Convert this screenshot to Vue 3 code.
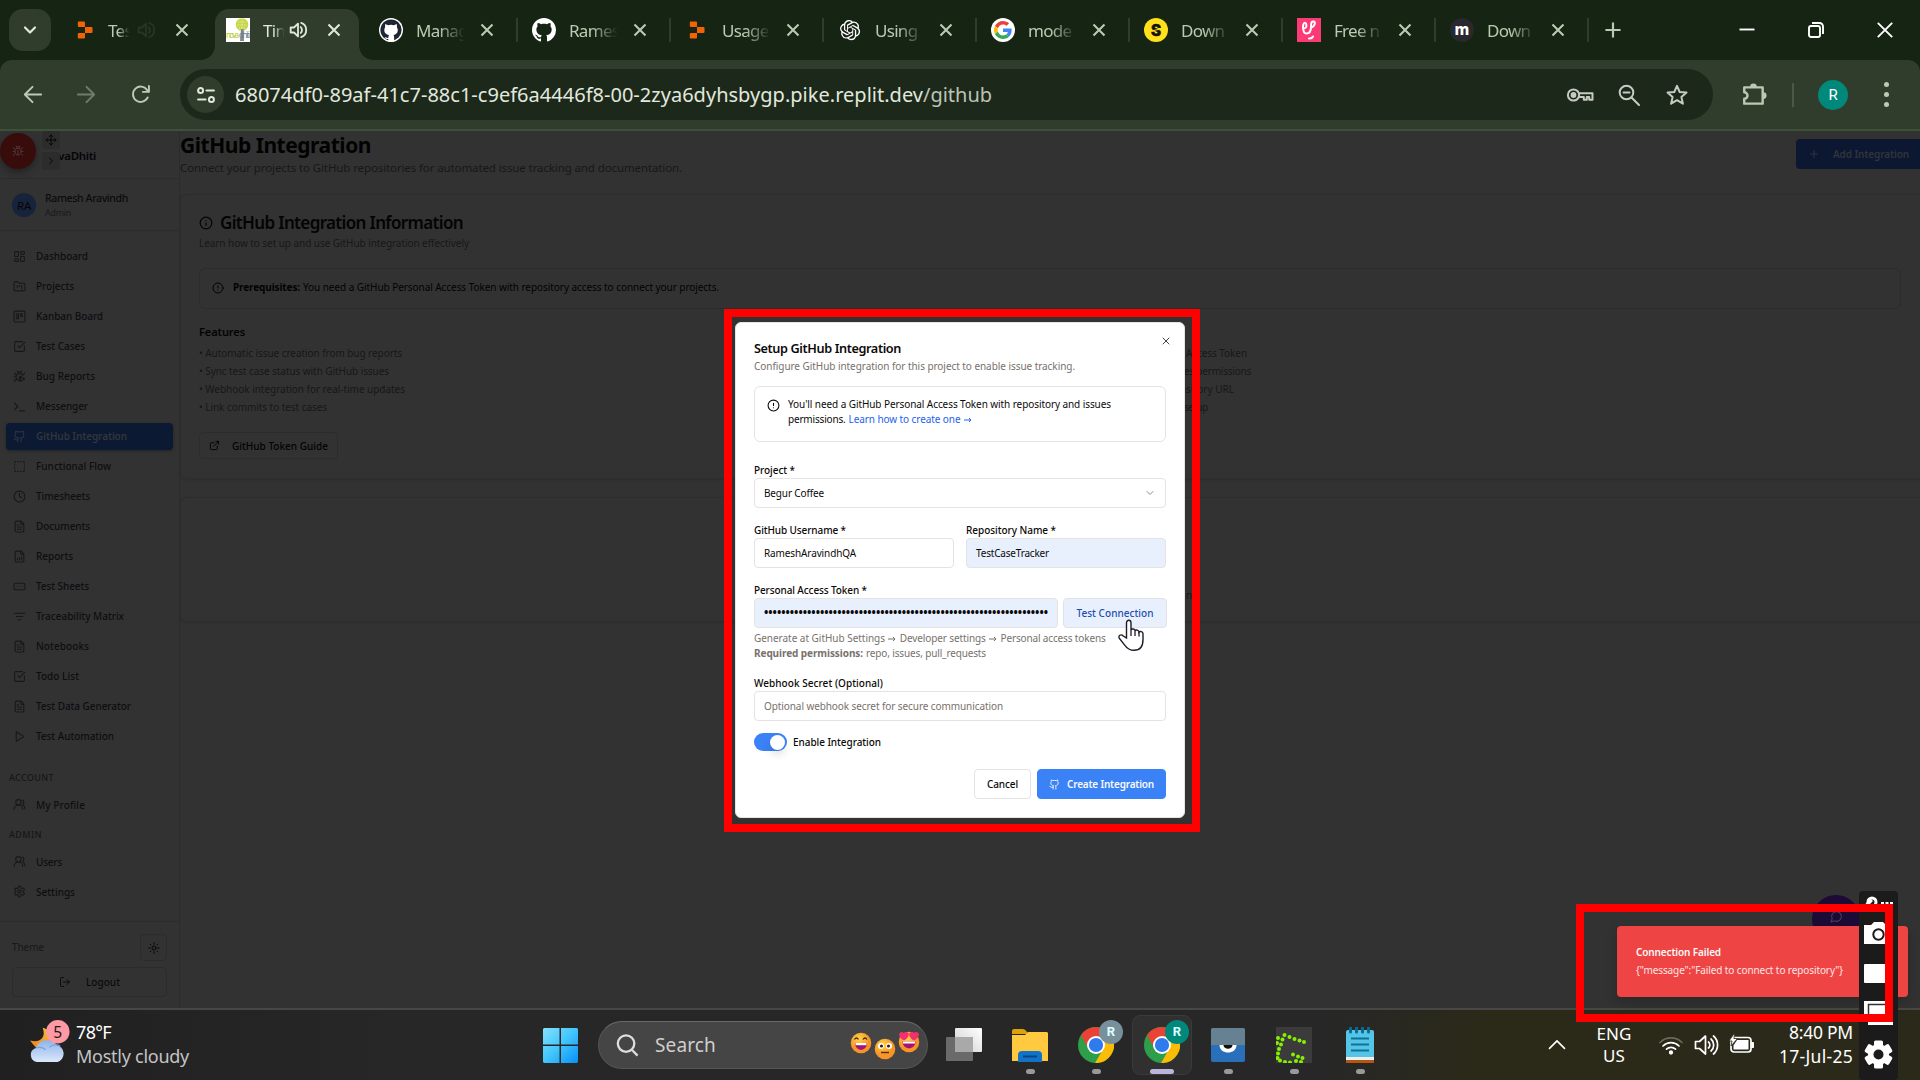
<script setup>
// Tunes tracking so a label occupies the given width in pixels.
const fit = (el, { value }) => {
  if (!value) return
  el.style.letterSpacing = '0px'
  const n = el.textContent.length
  el.style.letterSpacing = `${(value - el.getBoundingClientRect().width) / n}px`
}
const vFit = { mounted: fit }

const speaker = '<path d="M4 9.3v5.4h3.6L12 19V5L7.6 9.3z"/><path d="M15 8.8a4.5 4.5 0 0 1 0 6.4"/><path d="M15.5 4.2a8.3 8.3 0 0 1 0 15.6"/>'
const ico = {
  grid: '<rect x="3" y="3" width="7" height="9" rx="1"/><rect x="14" y="3" width="7" height="5" rx="1"/><rect x="14" y="12" width="7" height="9" rx="1"/><rect x="3" y="16" width="7" height="5" rx="1"/>',
  folder: '<path d="M4 20h16a2 2 0 0 0 2-2V8a2 2 0 0 0-2-2h-7.93a2 2 0 0 1-1.66-.9l-.82-1.2A2 2 0 0 0 7.93 3H4a2 2 0 0 0-2 2v13c0 1.1.9 2 2 2Z"/><path d="M8 10v4M12 10v2M16 10v6"/>',
  kanban: '<rect x="2" y="2" width="20" height="20" rx="2"/><rect x="7" y="7" width="3" height="9"/><rect x="14" y="7" width="3" height="5"/>',
  check: '<path d="M21 10.5V19a2 2 0 0 1-2 2H5a2 2 0 0 1-2-2V5a2 2 0 0 1 2-2h12.5"/><path d="m9 11 3 3L22 4"/>',
  bugplay: '<path d="M12.77 19.67A6 6 0 0 1 6 14v-3a4 4 0 0 1 4-4h4a4 4 0 0 1 3.9 3.1M12 20v-9M14 12l7.5 4.5L14 21zM2 13h4M3 21c0-2.1 1.7-3.9 3.8-4M6.5 9C4.6 8.8 3 7.1 3 5M8 2l1.9 1.9M14.1 3.9 16 2M9 7.1v-1a3 3 0 1 1 6 0v1M21 5c0 2.1-1.6 3.8-3.5 4"/>',
  bug: '<path d="m8 2 1.88 1.88M14.12 3.88 16 2M9 7.13v-1a3 3 0 1 1 6 0v1M12 20c-3.3 0-6-2.7-6-6v-3a4 4 0 0 1 4-4h4a4 4 0 0 1 4 4v3c0 3.3-2.7 6-6 6M12 20v-9M6.53 9C4.6 8.8 3 7.1 3 5M6 13H2M3 21c0-2.1 1.7-3.9 3.8-4M20.97 5c0 2.1-1.6 3.8-3.5 4M22 13h-4M17.2 17c2.1.1 3.8 1.9 3.8 4"/>',
  terminal: '<path d="m3 18 6-6-6-6M12 20h9"/>',
  github: '<path d="M15 22v-4a4.8 4.8 0 0 0-1-3.5c3 0 6-2 6-5.5.08-1.25-.27-2.48-1-3.5.28-1.15.28-2.35 0-3.5 0 0-1 0-3 1.5-2.64-.5-5.36-.5-8 0C6 2 5 2 5 2c-.3 1.15-.3 2.35 0 3.5A5.4 5.4 0 0 0 4 9c0 3.5 3 5.5 6 5.5-.39.49-.68 1.05-.85 1.65S8.93 17.38 9 18v4"/><path d="M9 18c-4.51 2-5-2-7-2"/>',
  dashed: '<path d="M5 3a2 2 0 0 0-2 2M19 3a2 2 0 0 1 2 2M21 19a2 2 0 0 1-2 2M5 21a2 2 0 0 1-2-2M9 3h1M9 21h1M14 3h1M14 21h1M3 9v1M21 9v1M3 14v1M21 14v1"/>',
  clock: '<circle cx="12" cy="12" r="10"/><path d="M12 6v6l4 2"/>',
  file: '<path d="M15 2H6a2 2 0 0 0-2 2v16a2 2 0 0 0 2 2h12a2 2 0 0 0 2-2V7zM14 2v4a2 2 0 0 0 2 2h4M10 9H8M16 13H8M16 17H8"/>',
  report: '<path d="M15 2H6a2 2 0 0 0-2 2v16a2 2 0 0 0 2 2h12a2 2 0 0 0 2-2V7zM14 2v4a2 2 0 0 0 2 2h4M8 18v-2M12 18v-4M16 18v-6"/>',
  sheet: '<rect x="2" y="6" width="20" height="12" rx="2"/><path d="M12 12h.01M17 12h.01M7 12h.01"/>',
  filter: '<path d="M2 6h20M6 12h12M9 18h6"/>',
  play: '<path d="M6 3l14 9-14 9z"/>',
  users: '<path d="M18 21a8 8 0 0 0-16 0"/><circle cx="10" cy="8" r="5"/><path d="M22 20c0-3.37-2-6.5-4-8a5 5 0 0 0-.45-8.3"/>',
  gear: '<path d="M12.22 2h-.44a2 2 0 0 0-2 2v.18a2 2 0 0 1-1 1.73l-.43.25a2 2 0 0 1-2 0l-.15-.08a2 2 0 0 0-2.73.73l-.22.38a2 2 0 0 0 .73 2.73l.15.1a2 2 0 0 1 1 1.72v.51a2 2 0 0 1-1 1.74l-.15.09a2 2 0 0 0-.73 2.73l.22.38a2 2 0 0 0 2.73.73l.15-.08a2 2 0 0 1 2 0l.43.25a2 2 0 0 1 1 1.73V20a2 2 0 0 0 2 2h.44a2 2 0 0 0 2-2v-.18a2 2 0 0 1 1-1.73l.43-.25a2 2 0 0 1 2 0l.15.08a2 2 0 0 0 2.73-.73l.22-.39a2 2 0 0 0-.73-2.73l-.15-.08a2 2 0 0 1-1-1.74v-.5a2 2 0 0 1 1-1.74l.15-.09a2 2 0 0 0 .73-2.73l-.22-.38a2 2 0 0 0-2.73-.73l-.15.08a2 2 0 0 1-2 0l-.43-.25a2 2 0 0 1-1-1.73V4a2 2 0 0 0-2-2z"/><circle cx="12" cy="12" r="3"/>',
  sun: '<circle cx="12" cy="12" r="4"/><path d="M12 1.5v3M12 19.500v3M4.600 4.600l1.200 1.200M18.200 18.200l1.200 1.200M1.500 12h3M19.500 12h3M5.800 18.200l-1.200 1.200M19.400 4.600l-1.200 1.200"/>',
  logout: '<path d="M9 21H5a2 2 0 0 1-2-2V5a2 2 0 0 1 2-2h4M16 17l5-5-5-5M21 12H9"/>',
  info: '<circle cx="12" cy="12" r="10"/><path d="M12 16v-4M12 8h.01"/>',
  alert: '<circle cx="12" cy="12" r="10"/><path d="M12 8v4M12 16h.01"/>',
  external: '<path d="M15 3h6v6M10 14 21 3M18 13v6a2 2 0 0 1-2 2H5a2 2 0 0 1-2-2V8a2 2 0 0 1 2-2h6"/>',
  move: '<path d="M12 2v20M2 12h20M9 5l3-3 3 3M9 19l3 3 3-3M5 9l-3 3 3 3M19 9l3 3-3 3"/>',
  right: '<path d="m9 18 6-6-6-6"/>',
  down: '<path d="m6 9 6 6 6-6"/>',
  up: '<path d="m3 16 9-9 9 9"/>',
  x: '<path d="M18 6 6 18M6 6l12 12"/>',
  plus: '<path d="M5 12h14M12 5v14"/>',
  chat: '<path d="M7.900 20A9 9 0 1 0 4 16.100L2 22Z"/>',
  back: '<path d="M21 12H4M12 4l-8 8 8 8"/>',
  forward: '<path d="M3 12h17M12 4l8 8-8 8"/>',
  reload: '<path d="M19.500 15A8 8 0 1 1 19 7.500L20.500 9M20.800 3v6.300h-6.300"/>',
  tune: '<circle cx="5.500" cy="6.500" r="3"/><path d="M12.500 6.500h9M2.500 17.500h9"/><circle cx="18.500" cy="17.500" r="3"/>',
  key: '<circle cx="7" cy="12" r="5.600"/><circle cx="7" cy="12" r="1.900" fill="currentColor"/><path d="M12.500 10.200H26v6.600h-3.300v-2.900h-2.400v2.900h-3v-2.900h-4.800"/>',
  zoomout: '<circle cx="9.500" cy="9.500" r="6.800"/><path d="m14.500 14.500 7.500 7.500M6.500 9.500h6"/>',
  star: '<path d="m12 2.800 2.700 6.200 6.800.6-5.100 4.500 1.500 6.600-5.900-3.500-5.900 3.500 1.500-6.600-5.100-4.500 6.800-.6z"/>',
  puzzle: '<path d="M3 5h17v15H3v-4.500a3 3 0 0 0 0-6z"/><path d="M9.500 4.500a2 2 0 0 1 4 0M20.500 10.500a2 2 0 0 1 0 4" fill="currentColor"/>',
  speaker
}

const octo = 'M8 0C3.58 0 0 3.58 0 8c0 3.54 2.29 6.53 5.47 7.59.4.07.55-.17.55-.38 0-.19-.01-.82-.01-1.49-2.01.37-2.53-.49-2.69-.94-.09-.23-.48-.94-.82-1.13-.28-.15-.68-.52-.01-.53.63-.01 1.08.58 1.23.82.72 1.21 1.87.87 2.33.66.07-.52.28-.87.51-1.07-1.78-.2-3.64-.89-3.64-3.95 0-.87.31-1.59.82-2.15-.08-.2-.36-1.02.08-2.12 0 0 .67-.21 2.2.82.64-.18 1.32-.27 2-.27s1.36.09 2 .27c1.53-1.04 2.2-.82 2.2-.82.44 1.1.16 1.92.08 2.12.51.56.82 1.27.82 2.15 0 3.07-1.87 3.75-3.65 3.95.29.25.54.73.54 1.48 0 1.07-.01 1.93-.01 2.2 0 .21.15.46.55.38A8.01 8.01 0 0 0 16 8c0-4.42-3.58-8-8-8'
const openai = 'M22.2819 9.8211a5.9847 5.9847 0 0 0-.5157-4.9108 6.0462 6.0462 0 0 0-6.5098-2.9A6.0651 6.0651 0 0 0 4.9807 4.1818a5.9847 5.9847 0 0 0-3.9977 2.9 6.0462 6.0462 0 0 0 .7427 7.0966 5.98 5.98 0 0 0 .511 4.9107 6.051 6.051 0 0 0 6.5146 2.9001A5.9847 5.9847 0 0 0 13.2599 24a6.0557 6.0557 0 0 0 5.7718-4.2058 5.9894 5.9894 0 0 0 3.9977-2.9001 6.0557 6.0557 0 0 0-.7475-7.0729zm-9.022 12.6081a4.4755 4.4755 0 0 1-2.8764-1.0408l.1419-.0804 4.7783-2.7582a.7948.7948 0 0 0 .3927-.6813v-6.7369l2.02 1.1686a.071.071 0 0 1 .038.052v5.5826a4.504 4.504 0 0 1-4.4945 4.4944zm-9.6607-4.1254a4.4708 4.4708 0 0 1-.5346-3.0137l.142.0852 4.783 2.7582a.7712.7712 0 0 0 .7806 0l5.8428-3.3685v2.3324a.0804.0804 0 0 1-.0332.0615L9.74 19.9502a4.4992 4.4992 0 0 1-6.1408-1.6464zM2.3408 7.8956a4.485 4.485 0 0 1 2.3655-1.9728V11.6a.7664.7664 0 0 0 .3879.6765l5.8144 3.3543-2.0201 1.1685a.0757.0757 0 0 1-.071 0l-4.8303-2.7865A4.504 4.504 0 0 1 2.3408 7.872zm16.5963 3.8558L13.1038 8.364 15.1192 7.2a.0757.0757 0 0 1 .071 0l4.8303 2.7913a4.4944 4.4944 0 0 1-.6765 8.1042v-5.6772a.79.79 0 0 0-.407-.667zm2.0107-3.0231l-.142-.0852-4.7735-2.7818a.7759.7759 0 0 0-.7854 0L9.409 9.2297V6.8974a.0662.0662 0 0 1 .0284-.0615l4.8303-2.7866a4.4992 4.4992 0 0 1 6.6802 4.66zM8.3065 12.863l-2.02-1.1638a.0804.0804 0 0 1-.038-.0567V6.0742a4.4992 4.4992 0 0 1 7.3757-3.4537l-.142.0805L8.704 5.459a.7948.7948 0 0 0-.3927.6813zm1.0976-2.3654l2.602-1.4998 2.6069 1.4998v2.9994l-2.5974 1.4997-2.6067-1.4997Z'
const replit = '<g fill="#f26207"><path d="M5.500 3.500h5.500a1 1 0 0 1 1 1V9H6a1.200 1.200 0 0 1-1.200-1.200V4.500a1 1 0 0 1 .7-1zM12 9h6.500a1 1 0 0 1 1 1v4a1 1 0 0 1-1 1H12zM5.800 15H12v4.600a1 1 0 0 1-1 1H5.800a1 1 0 0 1-1-1V16a1 1 0 0 1 1-1z"/></g>'
const fav = {
  replit,
  nova: '<rect width="24" height="24" fill="#fff"/><circle cx="16" cy="6.500" r="6.300" fill="#c6d84a"/><path d="M12 4h8M11 7h10M13 10h7M16 1v11" stroke="#eef3c0" stroke-width=".8" stroke-dasharray="1.200 1.200"/><path d="M15 11h2.500l.5 12h-4z" fill="#7f8a90"/><text x="0" y="19.500" font-size="8" textLength="13" fill="#b4cc2c" font-family="Noto Sans">nova</text><text x="13" y="19.500" font-size="8" textLength="11" fill="#777f85" font-family="Noto Sans">dhiti</text>',
  ghdark: `<circle cx="12" cy="12" r="12" fill="#fff"/><circle cx="12" cy="12" r="10.600" fill="#1f2533"/><path d="M6.200 6l3 1.200a9 9 0 0 1 5.600 0l3-1.200.2 3.500c2 3.500 0 7-3.500 7.500.7.8.7 2 .7 6.800H9.300v-2.800c-2.300.4-3-.8-3.700-2 1.500 0 2 1.300 3.700.9 0-1.300.2-2.200.7-2.900C6 16.500 4.200 13 6 9.500z" fill="#fff"/>`,
  gh: `<path transform="scale(1.5)" fill="#fff" d="${octo}"/>`,
  openai: `<path transform="translate(2 2) scale(.84)" fill="#fff" d="${openai}"/>`,
  google: '<circle cx="12" cy="12" r="12" fill="#fff"/><g transform="translate(3 3) scale(.375)"><path fill="#EA4335" d="M24 9.500c3.540 0 6.710 1.220 9.210 3.600l6.850-6.850C35.900 2.380 30.470 0 24 0 14.620 0 6.510 5.380 2.560 13.220l7.980 6.190C12.430 13.720 17.740 9.500 24 9.500z"/><path fill="#4285F4" d="M46.980 24.550c0-1.570-.15-3.090-.38-4.550H24v9.020h12.940c-.58 2.960-2.260 5.480-4.780 7.180l7.730 6c4.510-4.180 7.090-10.360 7.090-17.650z"/><path fill="#FBBC05" d="M10.530 28.590c-.48-1.450-.76-2.990-.76-4.590s.27-3.140.76-4.590l-7.980-6.190C.92 16.460 0 20.120 0 24c0 3.880.92 7.540 2.560 10.780z"/><path fill="#34A853" d="M24 48c6.480 0 11.930-2.130 15.890-5.810l-7.730-6c-2.150 1.450-4.920 2.300-8.160 2.300-6.260 0-11.570-4.220-13.470-9.910l-7.980 6.190C6.510 42.620 14.620 48 24 48z"/></g>',
  yellow: '<circle cx="12" cy="12" r="12" fill="#ffe01b"/><text x="12" y="17.800" text-anchor="middle" font-size="16" font-weight="900" fill="#111" stroke="#111" stroke-width=".6" font-family="Roboto">S</text><path d="M8 12.800l8-1.600" stroke="#ffe01b" stroke-width="1"/>',
  pink: '<rect width="24" height="24" fill="#fb3a76"/><g fill="none" stroke="#fff" stroke-width="2" stroke-linecap="round"><path d="M6 10.500c3 0 4-2 3.200-4.500C8.300 3.500 5.800 5 6 9c.1 4 .8 6.500 3.500 6.500 3.500 0 4.500-3 4.500-7 0-4 .8-5.500 2.800-5 2 .7.800 5-2.300 6"/><path d="M12 20.500c2 .3 3.200-.3 4-2"/></g>',
  m: '<circle cx="12" cy="12" r="12" fill="#29282d"/><text x="12" y="16.500" text-anchor="middle" font-size="15" font-weight="800" fill="#fff" font-family="Noto Sans">m</text>'
}
const tabs = [
  { icon: 'ghdark', text: 'Manag' }, { icon: 'gh', text: 'Rames' }, { icon: 'replit', text: 'Usage' },
  { icon: 'openai', text: 'Using' }, { icon: 'google', text: 'mode' }, { icon: 'yellow', text: 'Down' },
  { icon: 'pink', text: 'Free n' }, { icon: 'm', text: 'Down' }
]
const nav = [
  ['grid', 'Dashboard', 52], ['folder', 'Projects', 38], ['kanban', 'Kanban Board', 67], ['check', 'Test Cases', 49],
  ['bugplay', 'Bug Reports', 59], ['terminal', 'Messenger', 52], ['github', 'GitHub Integration', 91], ['dashed', 'Functional Flow', 75],
  ['clock', 'Timesheets', 54], ['file', 'Documents', 54], ['report', 'Reports', 37], ['sheet', 'Test Sheets', 53],
  ['filter', 'Traceability Matrix', 88], ['file', 'Notebooks', 53], ['check', 'Todo List', 43], ['file', 'Test Data Generator', 95],
  ['play', 'Test Automation', 78]
]
const features = [
  ['• Automatic issue creation from bug reports', 203], ['• Sync test case status with GitHub issues', 190],
  ['• Webhook integration for real-time updates', 206], ['• Link commits to test cases', 128]
]
const steps = [['Access Token', 61, 6], ['es permissions', 67, 4], ['ository URL', 54, 0], ['setup', 24, 4]]
const dots = '•'.repeat(66)
const chrome = '<circle cx="24" cy="24" r="22" fill="#2f9e4a"/><path fill="#ea4335" d="M24 14h19.600A22 22 0 0 0 5.600 12.200L15.340 29z"/><path fill="#fbbc05" d="M43.600 14H24l8.660 15L22.900 46A22 22 0 0 0 43.600 14z"/><circle cx="24" cy="24" r="11" fill="#fff"/><circle cx="24" cy="24" r="8.700" fill="#2f7bed"/>'
const gDots = [[28, 15], [23.500, 13.500], [18.500, 12], [13.500, 10], [8.500, 8], [6.500, 12.500], [2, 11], [5, 17.500], [3, 22], [2, 26.500], [1.500, 31], [4, 33.500], [9, 35], [14, 35.500], [20, 34], [25, 35], [26.500, 31], [22, 29.500], [17, 27.500], [1, 16]]
</script>

<template>
  <div class="screen">
    <header class="tabstrip">
      <div class="search-tabs"><svg class="i s24" viewBox="0 0 24 24" v-html="ico.down"></svg></div>
      <div class="tab first">
        <svg class="fav" viewBox="0 0 24 24" v-html="fav.replit"></svg>
        <span class="tt short">Tes</span>
        <svg class="i vol faint" viewBox="0 0 24 24" v-html="ico.speaker"></svg>
        <svg class="i close" viewBox="0 0 24 24" v-html="ico.x"></svg>
      </div>
      <div class="tab active">
        <svg class="fav" viewBox="0 0 24 24" v-html="fav.nova"></svg>
        <span class="tt short">Tin</span>
        <svg class="i vol" viewBox="0 0 24 24" v-html="ico.speaker"></svg>
        <svg class="i close" viewBox="0 0 24 24" v-html="ico.x"></svg>
      </div>
      <div v-for="(t, k) in tabs" :key="k" class="tab plain">
        <svg class="fav" viewBox="0 0 24 24" v-html="fav[t.icon]"></svg>
        <span class="tt">{{ t.text }}</span>
        <svg class="i close" viewBox="0 0 24 24" v-html="ico.x"></svg>
      </div>
      <svg class="i newtab" viewBox="0 0 24 24" v-html="ico.plus"></svg>
      <div class="winctl">
        <svg viewBox="0 0 16 16"><path d="M.5 7.500h15" /></svg>
        <svg viewBox="0 0 16 16"><rect x="1" y="4" width="11" height="11" rx="2" /><path d="M4 1h7.500A3.500 3.500 0 0 1 15 4.500V12" /></svg>
        <svg viewBox="0 0 16 16"><path d="m.8.8 14.400 14.400M15.200.8.8 15.200" /></svg>
      </div>
    </header>
    <div class="toolbar">
      <svg class="i nv" viewBox="0 0 24 24" v-html="ico.back"></svg>
      <svg class="i nv off" viewBox="0 0 24 24" v-html="ico.forward"></svg>
      <svg class="i nv" viewBox="0 0 24 24" v-html="ico.reload"></svg>
      <div class="omni">
        <span class="site"><svg class="i tune" viewBox="0 0 24 24" v-html="ico.tune"></svg></span>
        <span class="url"><span v-fit="688">68074df0-89af-41c7-88c1-c9ef6a4446f8-00-2zya6dyhsbygp.pike.replit.dev</span><span v-fit="69" class="path">/github</span></span>
        <svg class="i key" viewBox="0 0 28 24" v-html="ico.key"></svg>
        <svg class="i om" viewBox="0 0 24 24" v-html="ico.zoomout"></svg>
        <svg class="i om" viewBox="0 0 24 24" v-html="ico.star"></svg>
      </div>
      <svg class="i puzzle" viewBox="0 0 24 24" v-html="ico.puzzle"></svg>
      <span class="tsep"></span>
      <span class="profile">R</span>
      <span class="kebab"><b></b><b></b><b></b></span>
    </div>

    <div class="page">
      <aside class="sidebar">
        <div class="brand">
          <span class="bugbtn"><svg class="i" viewBox="0 0 24 24" v-html="ico.bug"></svg></span>
          <span class="brandname"><span v-fit="53">NovaDhiti</span></span>
          <span class="floaters">
            <span><svg class="i" viewBox="0 0 24 24" v-html="ico.move"></svg></span>
            <span><svg class="i" viewBox="0 0 24 24" v-html="ico.right"></svg></span>
          </span>
        </div>
        <div class="user">
          <span class="ra">RA</span>
          <div><p class="uname"><span v-fit="83">Ramesh Aravindh</span></p><p class="urole"><span v-fit="26">Admin</span></p></div>
        </div>
        <nav>
          <div v-for="(n, k) in nav" :key="n[1]" class="item" :class="{ on: k === 6 }">
            <svg class="i" viewBox="0 0 24 24" v-html="ico[n[0]]"></svg><span v-fit="n[2]">{{ n[1] }}</span>
          </div>
          <h6 class="acc"><span v-fit="45">ACCOUNT</span></h6>
          <div class="item"><svg class="i" viewBox="0 0 24 24" v-html="ico.users"></svg><span v-fit="49">My Profile</span></div>
          <h6><span v-fit="33">ADMIN</span></h6>
          <div class="item"><svg class="i" viewBox="0 0 24 24" v-html="ico.users"></svg><span v-fit="26">Users</span></div>
          <div class="item"><svg class="i" viewBox="0 0 24 24" v-html="ico.gear"></svg><span v-fit="39">Settings</span></div>
        </nav>
        <div class="sidefoot">
          <div class="theme"><span v-fit="32">Theme</span><b><svg class="i" viewBox="0 0 24 24" v-html="ico.sun"></svg></b></div>
          <div class="logout"><svg class="i" viewBox="0 0 24 24" v-html="ico.logout"></svg><span v-fit="34">Logout</span></div>
        </div>
      </aside>
      <main>
        <div class="head">
          <div>
            <h1><span v-fit="191">GitHub Integration</span></h1>
            <p><span v-fit="502">Connect your projects to GitHub repositories for automated issue tracking and documentation.</span></p>
          </div>
          <div class="addbtn"><svg class="i" viewBox="0 0 24 24" v-html="ico.plus"></svg><span v-fit="76">Add Integration</span></div>
        </div>
        <section class="card info">
          <h2><svg class="i" viewBox="0 0 24 24" v-html="ico.info"></svg><span v-fit="243">GitHub Integration Information</span></h2>
          <p class="muted"><span v-fit="270">Learn how to set up and use GitHub integration effectively</span></p>
          <div class="prereq">
            <svg class="i" viewBox="0 0 24 24" v-html="ico.alert"></svg>
            <strong v-fit="67">Prerequisites:</strong>
            <span v-fit="416">You need a GitHub Personal Access Token with repository access to connect your projects.</span>
          </div>
          <h3><span v-fit="46">Features</span></h3>
          <div class="cols">
            <ul><li v-for="f in features" :key="f[0]"><span v-fit="f[1]">{{ f[0] }}</span></li></ul>
            <ul><li v-for="s in steps" :key="s[0]" :style="{ paddingLeft: s[2] + 'px' }"><span v-fit="s[1]">{{ s[0] }}</span></li></ul>
          </div>
          <div class="guide"><svg class="i" viewBox="0 0 24 24" v-html="ico.external"></svg><span v-fit="96">GitHub Token Guide</span></div>
        </section>
        <section class="card empty"><span>n.</span></section>
      </main>
      <div class="fab"><svg class="i" viewBox="0 0 24 24" v-html="ico.chat"></svg></div>
    </div>

    <footer class="taskbar">
      <div class="weather">
        <svg viewBox="0 0 44 50">
          <defs><linearGradient id="mn" x1="1" y1="0" x2="0" y2="1"><stop offset="0" stop-color="#f8c640" /><stop offset="1" stop-color="#ee7b10" /></linearGradient><linearGradient id="cl" x1="0" y1="0" x2="0" y2="1"><stop offset="0" stop-color="#8fb3ea" /><stop offset="1" stop-color="#dbe8fb" /></linearGradient></defs>
          <path d="M14 10c9 3 16 12 12 22-5 5-14 6-25-9 10 3 17-3 13-13z" fill="url(#mn)" />
          <path d="M8 45a7.500 7.500 0 0 1-1-14.500 12 12 0 0 1 21-3A9 9 0 0 1 29 45z" fill="url(#cl)" />
          <path d="M7 30.500c5-1.500 8 0 10 2M21 30c2-3 8-3.500 11-1" fill="none" stroke="#7ba3e2" stroke-width="1.500" />
          <circle cx="29.500" cy="14" r="12" fill="#ff99a4" />
          <text x="29.500" y="20" text-anchor="middle" font-size="16" fill="#1c1c1c">5</text>
        </svg>
        <div class="wt"><p><span v-fit="35">78°F</span></p><p class="dim"><span v-fit="113">Mostly cloudy</span></p></div>
      </div>
      <svg class="win" viewBox="0 0 35 35">
        <defs><linearGradient id="wl" x1="0" y1="0" x2="1" y2="1"><stop offset="0" stop-color="#85e1fe" /><stop offset=".5" stop-color="#41c5fb" /><stop offset="1" stop-color="#078ff9" /></linearGradient></defs>
        <path d="M1 0h15.500v16.500H0V1zM18 0h16l1 1v15.500H18zM0 18h16.500v17H1l-1-1zM18 18h17v16l-1 1H18z" fill="url(#wl)" />
      </svg>
      <div class="search">
        <svg class="mag" viewBox="0 0 24 24"><circle cx="10.500" cy="10" r="8.600" /><path d="m17 17 5.500 5.500" /></svg>
        <span v-fit="61">Search</span>
        <svg class="emoji" viewBox="0 0 70 30">
          <defs><radialGradient id="em" cx=".4" cy=".3"><stop offset="0" stop-color="#ffd447" /><stop offset="1" stop-color="#f79425" /></radialGradient></defs>
          <circle cx="11" cy="12" r="10.300" fill="url(#em)" /><path d="M5 12h12c0 9-12 9-12 0z" fill="#a5127a" /><path d="M5.500 12h11v2.200h-11z" fill="#fff" /><path d="M4.500 8.500q2-3 4 0M13 8.500q2-3 4 0" fill="none" stroke="#42291c" stroke-width="1.300" />
          <circle cx="35" cy="18" r="10.300" fill="url(#em)" /><circle cx="31" cy="15" r="3" fill="#fff" /><circle cx="39" cy="15" r="3" fill="#fff" /><circle cx="31.500" cy="15" r="1.600" fill="#332018" /><circle cx="38.500" cy="15" r="1.600" fill="#332018" /><path d="M31 21.500h8" stroke="#5a2c15" stroke-width="1.500" />
          <circle cx="59" cy="11" r="10.300" fill="url(#em)" /><path d="M52.500 10.500h13c0 9-13 9-13 0z" fill="#a5127a" /><path d="M53 10.500h12v2h-12z" fill="#fff" /><path d="M54 9.500c-6-3-6-8-2.500-8.500 1.500 0 2.500 1 2.500 1s2-2 4-.5c2 2 0 6-4 8zM64 9.500c6-3 6-8 2.500-8.500C65 1 64 2 64 2s-2-2-4-.5c-2 2 0 6 4 8z" fill="#f2306f" />
        </svg>
      </div>
      <svg class="tview" viewBox="0 0 36 33">
        <defs><linearGradient id="tv" x1="1" y1="0" x2="0" y2="1"><stop offset="0" stop-color="#fff" /><stop offset="1" stop-color="#cfcfcf" /></linearGradient></defs>
        <rect x="9" width="27" height="24" rx="1" fill="url(#tv)" /><rect y="9" width="27" height="24" rx="1" fill="#6a6a6a" /><path d="M9 9h18v15H9z" fill="#a9a9a9" />
      </svg>
      <div class="app">
        <svg viewBox="0 0 36 36"><path d="M0 4q0-2 2-2h9q2 0 4 3l1 2H0z" fill="#e0a008" /><path d="M0 8h13l3-3h19l1 1v28H0z" fill="#ffca3f" /><path d="M6 35v-7q0-4 4-4h16q4 0 4 4v7z" fill="#1173c8" /><path d="M11 29.500h14" stroke="#0a4480" stroke-width="2" /></svg><i></i>
      </div>
      <div class="app">
        <svg viewBox="2 2 44 44" v-html="chrome"></svg><span class="badge grey">R</span><i></i>
      </div>
      <div class="app cur">
        <svg viewBox="2 2 44 44" v-html="chrome"></svg><span class="badge">R</span><i></i>
      </div>
      <div class="app">
        <svg viewBox="0 0 36 36"><rect x="1" y="1" width="34" height="34" rx="2" fill="#2a6fba" /><path d="M1 3q0-2 2-2h30q2 0 2 2v15H1z" fill="#668292" /><path d="M9.500 18h17c0 10-17 10-17 0z" fill="#fff" /><path d="M13.500 18h9c0 5-9 5-9 0z" fill="#111" /></svg><i></i>
      </div>
      <div class="app">
        <svg viewBox="0 0 36 36"><rect width="36" height="36" fill="#3b3b3b" /><circle v-for="(d, k) in gDots" :key="k" :cx="d[0]" :cy="d[1]" r="2" fill="#85f000" /></svg><i></i>
      </div>
      <div class="app">
        <svg viewBox="0 0 36 36"><path d="M4 28h28v8H4z" fill="#b3560f" /><path d="M4 28h28v5H4z" fill="#eee" /><path d="M4 5q0-2 2-2h24q2 0 2 2v25H4z" fill="#55c4e6" /><path d="M8.500 1v4M14.500 1v4M20.500 1v4M26.500 1v4" stroke="#0b6a93" stroke-width="3" stroke-linecap="round" /><path d="M9 11.500h18M9 17.500h18M9 23.500h18" stroke="#0b7396" stroke-width="2" /></svg><i></i>
      </div>
      <div class="tray">
        <svg class="i trup" viewBox="0 0 24 24" v-html="ico.up"></svg>
        <div class="lang"><p><span v-fit="35">ENG</span></p><p><span v-fit="22">US</span></p></div>
        <svg class="wifi" viewBox="0 0 24 20"><path d="M1 7.500a15.500 15.500 0 0 1 22 0" opacity=".3" /><path d="M4 11a11.300 11.300 0 0 1 16 0M7.500 14.200a6.500 6.500 0 0 1 9 0" /><circle cx="12" cy="17.500" r="1.300" fill="#fff" /></svg>
        <svg class="snd" viewBox="0 0 26 22"><path d="M1.500 7.500v7h4L11.500 20V2L5.500 7.500zM14.500 8a4 4 0 0 1 0 6M17 5a8 8 0 0 1 0 12M19.500 2a12 12 0 0 1 0 18" /></svg>
        <svg class="bat" viewBox="0 0 26 22"><rect x="2" y="4.500" width="20" height="14.500" rx="3" /><path d="M8 7h11.500v9.500H4.500v-4z" fill="#fff" stroke="none" /><path d="M22.500 9.500h2v5h-2z" fill="#fff" stroke-width="1" /><path d="M5.500 0 0 8h3L2 13l6.500-7.500H5.300z" fill="#fff" stroke="#2b2a1a" stroke-width=".8" /></svg>
        <div class="clock"><p><span v-fit="64">8:40 PM</span></p><p><span v-fit="74">17-Jul-25</span></p></div>
      </div>
    </footer>

    <div class="modal">
      <svg class="i mx" viewBox="0 0 24 24" v-html="ico.x"></svg>
      <h4><span v-fit="147">Setup GitHub Integration</span></h4>
      <p class="msub"><span v-fit="321">Configure GitHub integration for this project to enable issue tracking.</span></p>
      <div class="malert">
        <svg class="i" viewBox="0 0 24 24" v-html="ico.alert"></svg>
        <div>
          <p><span v-fit="323">You'll need a GitHub Personal Access Token with repository and issues</span></p>
          <p><span v-fit="57.500">permissions.</span><a><span v-fit="112">Learn how to create one</span><svg class="arr blue" viewBox="0 0 8 6"><path d="M0 3h7M5 1l2 2-2 2" /></svg></a></p>
        </div>
      </div>
      <label><span v-fit="41">Project *</span></label>
      <div class="field"><span v-fit="60">Begur Coffee</span><svg class="i chev" viewBox="0 0 24 24" v-html="ico.down"></svg></div>
      <div class="two">
        <div><label><span v-fit="92">GitHub Username *</span></label><div class="field"><span v-fit="92">RameshAravindhQA</span></div></div>
        <div><label><span v-fit="90">Repository Name *</span></label><div class="field fill"><span v-fit="73">TestCaseTracker</span></div></div>
      </div>
      <label class="gap"><span v-fit="113">Personal Access Token *</span></label>
      <div class="tokenrow"><div class="field fill"><span v-fit="284" class="dots">{{ dots }}</span></div><div class="testbtn"><span v-fit="77">Test Connection</span></div></div>
      <p class="hint"><span v-fit="131">Generate at GitHub Settings</span><svg class="arr" viewBox="0 0 8 6"><path d="M0 3h7M5 1l2 2-2 2" /></svg><span v-fit="86">Developer settings</span><svg class="arr" viewBox="0 0 8 6"><path d="M0 3h7M5 1l2 2-2 2" /></svg><span v-fit="105">Personal access tokens</span></p>
      <p class="hint"><strong v-fit="109">Required permissions:</strong><span class="perm" v-fit="120">repo, issues, pull_requests</span></p>
      <label class="gap"><span v-fit="129">Webhook Secret (Optional)</span></label>
      <div class="field ph"><span v-fit="239">Optional webhook secret for secure communication</span></div>
      <div class="enable"><span class="switch"><b></b></span><span v-fit="88">Enable Integration</span></div>
      <div class="acts">
        <div class="btn"><span v-fit="31">Cancel</span></div>
        <div class="btn pri"><svg class="i" viewBox="0 0 24 24" v-html="ico.github"></svg><span v-fit="87">Create Integration</span></div>
      </div>
    </div>

    <div class="toast"><p class="b"><span v-fit="85">Connection Failed</span></p><p><span v-fit="207">{"message":"Failed to connect to repository"}</span></p></div>

    <div class="recorder">
      <svg viewBox="0 0 39 189">
        <g fill="#fff"><circle cx="13" cy="11" r="4" fill="none" stroke="#fff" stroke-width="3" /><path d="m5 15 6-8 3 3-5 5zM22 11h3v3h-3zM26.500 11h3v3h-3zM31 11h3v3h-3z" />
          <path d="M5 34h7l3-3h9l3 3h7v19H5z" /><rect x="5" y="73" width="28" height="19" rx="1" /><path d="M5 110h29v24H9v-10H5z" /></g>
        <circle cx="19.500" cy="43.500" r="5.200" fill="#fff" stroke="#1b1b1b" stroke-width="2" /><path d="M9.500 124v-10.500h20" fill="none" stroke="#333" stroke-width="1.500" />
        <g transform="translate(19.500 163.500)" fill="#fff"><rect v-for="a in 3" :key="a" x="-4.500" y="-14" width="9" height="28" rx="1.500" :transform="`rotate(${a * 60})`" /><circle r="10.500" /><circle r="5" fill="#1b1b1b" /></g>
      </svg>
    </div>
    <div class="mark one"></div>
    <div class="mark two-m"></div>
    <svg class="hand" viewBox="0 0 26 33"><path d="M8.500 19V4c0-3.600 4.500-3.600 4.500 0v7c.5-1.500 4-1.300 4 .8.700-1.300 4-.8 4 1.200.8-1 4-.6 4 1.800v6c0 6-2.500 10.500-9 10.500-5 0-7-2-9.500-5.500L1.500 19.500c-2-3 1.700-4.800 3.800-2.500z" fill="#fff" stroke="#1c1c28" stroke-width="1.400" /><path d="M13 11v6M17 12v5M21 13v4.500" stroke="#1c1c28" stroke-width="1.300" /></svg>
  </div>
</template>

<style>
body { margin: 0; background: #323232; overflow: hidden; }
</style>
<style scoped>
* { box-sizing: border-box; }
p, h1, h2, h3, h4, h6, ul { margin: 0; padding: 0; list-style: none; font-weight: 400; }
.screen { position: relative; width: 1920px; height: 1080px; display: flex; flex-direction: column; overflow: hidden; font-family: "Noto Sans", "Open Sans", sans-serif; font-size: 10px; background: #162413; white-space: nowrap; }
svg { display: block; flex: none; }
span { white-space: nowrap; }
.i { fill: none; stroke: currentColor; stroke-width: 2; stroke-linecap: round; stroke-linejoin: round; width: 13px; height: 13px; }

.tabstrip { height: 60px; display: flex; align-items: center; padding-left: 9px; color: #b9ccb3; flex: none; }
.search-tabs { width: 42px; height: 42px; border-radius: 14px; background: #303d2d; display: flex; align-items: center; justify-content: center; color: #e2eadd; }
.search-tabs .i { width: 20px; height: 20px; stroke-width: 2.600; }
.tab { display: flex; align-items: center; height: 51px; margin-top: 9px; padding-bottom: 9px; flex: none; position: relative; }
.fav { width: 24px; height: 24px; }
.tt { font-size: 17px; line-height: 24px; width: 50px; margin-left: 13px; overflow: hidden; padding-top: 1px; letter-spacing: -.7px; -webkit-mask-image: linear-gradient(90deg, #000 45%, transparent 98%); mask-image: linear-gradient(90deg, #000 45%, transparent 98%); }
.tt.short { width: 22px; }
.close { width: 22px; height: 22px; stroke-width: 2.300; margin-left: 10px; stroke-linecap: butt; }
.vol { width: 22px; height: 22px; margin-left: 2px; stroke-width: 2; }
.faint { opacity: .1; }
.first { width: 164px; padding-left: 22px; }
.first .vol { margin-left: 5px; }
.first .close { margin-left: 14px; }
.first .tt { margin-left: 11px; }
.active { width: 144px; padding-left: 11px; background: #303d2d; border-radius: 14px 14px 0 0; color: #e0e8db; }
.active .close { margin-left: 14px; }
.active::before, .active::after { content: ""; position: absolute; bottom: 0; width: 14px; height: 14px; }
.active::before { left: -14px; background: radial-gradient(circle at 0 0, transparent 13.500px, #303d2d 14px); }
.active::after { right: -14px; background: radial-gradient(circle at 100% 0, transparent 13.500px, #303d2d 14px); }
.plain { width: 153px; padding-left: 14px; }
.active + .plain { width: 159px; padding-left: 20px; }
.plain::after { content: ""; position: absolute; right: 0; top: 9px; width: 2px; height: 24px; background: #303d2d; }
.newtab { width: 26px; height: 26px; margin-left: 11px; stroke-linecap: butt; }
.winctl { margin-left: auto; display: flex; gap: 53px; padding-right: 27px; }
.winctl svg { width: 16px; height: 16px; fill: none; stroke: #fff; stroke-width: 1.900; }

.toolbar { height: 71px; flex: none; display: flex; align-items: center; background: #303d2d; border-bottom: 2px solid #3d5239; border-radius: 12px 12px 0 0; color: #b9ccb3; padding-left: 21px; }
.nv { width: 23px; height: 23px; margin-right: 31px; }
.nv.off { opacity: .45; }
.omni { width: 1533px; height: 51px; margin-left: -3px; border-radius: 26px; background: #1c281a; display: flex; align-items: center; padding-left: 7px; color: #c5cbc0; flex: none; }
.site { width: 37px; height: 37px; border-radius: 50%; background: #303d2d; display: flex; align-items: center; justify-content: center; color: #e0e8db; }
.tune { width: 20px; height: 20px; stroke-width: 2.400; }
.url { font-size: 20px; line-height: 28px; margin-left: 11px; width: 1331px; color: #e2e8de; display: flex; }
.path { color: #bcc4b7; }
.key { width: 29px; height: 24px; stroke-width: 2; }
.om { width: 24px; height: 24px; margin-left: 22px; }
.om + .om { margin-left: 24px; }
.puzzle { width: 26px; height: 26px; margin-left: 28px; stroke-width: 2.200; }
.tsep { width: 2px; height: 24px; background: #485a43; margin-left: 25px; }
.profile { width: 30px; height: 30px; border-radius: 50%; background: #00897b; color: #fff; font: 15px/30px Roboto, sans-serif; text-align: center; margin-left: 24px; }
.kebab { display: flex; flex-direction: column; gap: 5px; margin-left: 36px; }
.kebab b { width: 5px; height: 5px; border-radius: 50%; background: #b9ccb3; }

.page { height: 877px; flex: none; display: flex; background: #323232; position: relative; }
.sidebar { width: 180px; border-right: 1px solid #2c2c2e; display: flex; flex-direction: column; flex: none; color: #0b0b0d; }
.brand { height: 48px; border-bottom: 1px solid #2b2b2c; position: relative; flex: none; }
.bugbtn { position: absolute; left: 0; top: 2px; width: 36px; height: 36px; border-radius: 50%; background: #390c0c; color: #4c3434; display: flex; align-items: center; justify-content: center; box-shadow: 0 3px 6px #222; }
.bugbtn .i { width: 12px; height: 12px; }
.brandname { display: block; padding: 16px 0 0 43px; font-size: 11.500px; line-height: 18px; font-weight: 600; color: #050507; }
.floaters { position: absolute; left: 42px; top: 0; display: flex; flex-direction: column; gap: 3px; }
.floaters span { width: 18px; height: 18px; border-radius: 3px; background: #2c2c2c; display: flex; align-items: center; justify-content: center; color: #060606; }
.floaters .i { width: 12px; height: 12px; }
.user { height: 52px; border-bottom: 1px solid #2b2b2c; display: flex; align-items: center; padding-left: 12px; gap: 9px; flex: none; }
.ra { width: 24px; height: 24px; border-radius: 50%; background: #17233a; color: #040408; font-size: 11.500px; line-height: 25px; text-align: center; letter-spacing: -.3px; }
.uname { font-weight: 500; line-height: 16px; font-size: 10.500px; padding-bottom: 0; }
.urole { color: #191a1b; font-size: 9px; line-height: 13px; }
nav { padding: 11.500px 6px 0; display: flex; flex-direction: column; gap: 3px; }
.item { height: 27px; border-radius: 4px; display: flex; align-items: center; gap: 10px; padding-left: 7px; font-weight: 500; font-size: 10px; color: #0d0e11; }
.item .i { color: #17181b; }
.on { background: #0c1932; color: #31353c; font-weight: 600; box-shadow: 0 1px 3px #222; }
.on .i { color: #2c3340; }
h6 { font-size: 9px; line-height: 14px; height: 14px; font-weight: 500; color: #151619; padding-left: 3px; margin: 7px 0 3px; }
h6.acc { margin-top: 18.500px; }
.sidefoot { margin-top: auto; height: 87px; border-top: 1px solid #2b2b2c; padding: 12px 12px 0; }
.theme { display: flex; justify-content: space-between; align-items: center; height: 27px; color: #16171a; }
.theme > span { padding-bottom: 2px; }
.theme b { width: 27px; height: 27px; border: 1px solid #2b2b2c; border-radius: 4px; display: flex; align-items: center; justify-content: center; color: #050505; }
.theme .i { width: 12px; height: 12px; }
.logout { margin-top: 6px; height: 30px; border: 1px solid #2b2b2c; border-radius: 4px; display: flex; align-items: center; padding-left: 46px; gap: 15px; font-weight: 500; }
.logout .i { width: 12px; height: 12px; }

main { flex: 1; min-width: 0; color: #020202; }
.head { height: 63px; display: flex; justify-content: space-between; }
h1 { font-size: 21px; line-height: 28px; font-weight: 700; }
.head p { font-size: 11.500px; line-height: 18px; color: #181716; }
.addbtn { width: 124px; height: 30px; margin-top: 8px; border-radius: 4px 0 0 4px; background: #0c1831; color: #30343b; display: flex; align-items: center; gap: 13px; padding-left: 12px; font-weight: 600; }
.addbtn .i { width: 12px; height: 12px; }
.card { border: 1px solid #2d2d2d; border-right: 0; border-radius: 6px 0 0 6px; box-shadow: 0 1px 2px #2e2e2e; }
.info { height: 285px; padding: 16px 19px 0 18px; }
h2 { display: flex; align-items: center; gap: 7px; font-size: 17px; line-height: 24px; font-weight: 600; color: #040404; }
h2 .i { width: 14px; height: 14px; }
.muted { color: #181716; line-height: 18px; margin-top: -1px; }
.prereq { margin-top: 16px; height: 41px; border: 1px solid #2c2c2c; border-radius: 6px; display: flex; align-items: flex-start; padding: 10px 0 0 12px; line-height: 16px; }
.prereq .i { width: 12px; height: 12px; margin: 3px 9px 0 0; }
.prereq strong { margin-right: 3px; font-weight: 700; }
h3 { margin-top: 13px; line-height: 20px; font-size: 11px; font-weight: 600; }
.cols { display: grid; grid-template-columns: 981px 1fr; margin-top: 2px; color: #181716; }
li { height: 18px; line-height: 18px; }
.guide { width: 139px; height: 27px; margin-top: 16px; border: 1px solid #2c2c2c; border-radius: 4px; display: flex; align-items: center; padding-left: 9px; gap: 12px; font-weight: 500; }
.guide .i { width: 11px; height: 11px; }
.empty { height: 125px; margin-top: 18px; color: #181716; padding: 88px 0 0 1005px; line-height: 18px; }
.fab { position: absolute; left: 1812px; top: 764px; width: 48px; height: 48px; border-radius: 50%; background: #1c0b36; color: #4a4156; padding: 15px 18px; }

.taskbar { height: 72px; flex: none; border-top: 2px solid #474745; display: flex; align-items: center; background: linear-gradient(90deg, #202020 0, #272727 400px, #272727 1330px, #2b2918 1480px, #2b2a1a 100%); color: #fff; font-size: 18px; }
.weather { width: 543px; display: flex; padding: 0 0 5px 29px; gap: 4px; align-items: center; }
.weather svg { width: 43px; height: 49px; }
.wt p { line-height: 24px; height: 24px; }
.wt { padding-top: 2px; }
.dim { color: #c4c4c4; }
.win { width: 35px; height: 35px; }
.search { width: 330px; height: 48px; margin-left: 20px; border-radius: 24px; background: #454545; border: 1px solid #555; border-top-color: #6a6a6a; display: flex; align-items: center; color: #cfcfcf; font-size: 19px; }
.mag { width: 23px; height: 23px; margin: 0 16px 0 17px; fill: none; stroke: #dedede; stroke-width: 2.400; }
.emoji { width: 70px; height: 30px; margin: 2px 0 0 134px; }
.tview { width: 36px; height: 33px; margin: 0 15px 2px 18px; }
.app { width: 60px; height: 60px; margin: -1px 3px 0; position: relative; border-radius: 8px; flex: none; border: 1px solid transparent; padding: 11px; }
.app svg { width: 36px; height: 36px; }
.app i { display: block; width: 9px; height: 5px; border-radius: 3px; background: #999; margin: 6px auto 0; }
.cur { background: #303030; border-color: #3a3a3a; }
.cur i { width: 24px; background: #bab5dc; }
.badge { position: absolute; left: 32px; top: 4px; width: 24px; height: 24px; border-radius: 50%; background: #00897b; color: #dff; font: 700 13px/24px Roboto, sans-serif; text-align: center; }
.grey { background: #78909c; }
.tray { margin-left: 154px; display: flex; align-items: center; flex: none; }
.trup { width: 20px; height: 20px; }
.lang { width: 60px; text-align: center; margin-left: 17px; font-size: 17px; }
.lang p { line-height: 22px; }
.clock { text-align: right; margin-left: 18px; width: 80px; font-size: 17.500px; }
.clock p { line-height: 24px; }
.clock { padding-bottom: 2px; }
.wifi, .snd, .bat { fill: none; stroke: #fff; stroke-width: 1.700; stroke-linecap: round; stroke-linejoin: round; }
.wifi { width: 24px; height: 20px; margin-left: 15px; }
.snd { width: 26px; height: 22px; margin: 0 0 1px 11px; }
.bat { width: 26px; height: 22px; margin: 0 0 3px 9px; }

.modal { position: absolute; left: 735px; top: 322px; width: 450px; height: 496px; border-radius: 6px; background: #fff; border: 1px solid #e7e5e4; padding: 15px 18px 0; color: #0c0a09; display: flex; flex-direction: column; }
.mx { position: absolute; right: 12px; top: 12px; width: 12px; height: 12px; color: #444; }
.modal > * { flex: none; }
h4 { font-size: 12.700px; line-height: 20px; font-weight: 600; }
.msub { line-height: 16px; color: #78716c; }
.malert { margin-top: 12px; height: 56px; border: 1px solid #e4e3e2; border-radius: 6px; display: flex; padding: 10px 0 0 12px; gap: 8px; }
.malert .i { width: 13px; height: 13px; margin-top: 2px; }
.malert p { line-height: 15px; display: flex; align-items: center; }
a { display: flex; align-items: center; color: #2563eb; margin-left: 3px; }
.arr { width: 8px; height: 6px; fill: none; stroke: #78716c; stroke-width: 1; margin: 1px 3.400px 0; }
.blue { stroke: #2563eb; }
label { display: block; font-weight: 500; height: 16px; line-height: 16px; }
.malert + label { margin-top: 20px; }
.gap { margin-top: 14px; }
.field { height: 30px; border: 1px solid #e4e3e2; border-radius: 4px; display: flex; align-items: center; padding: 0 9px; }
.chev { margin-left: auto; width: 12px; height: 12px; color: #8b8b8b; margin-right: 0; }
.two { display: grid; grid-template-columns: 1fr 1fr; gap: 12px; margin-top: 14px; }
.fill { background: #e8f0fe; }
.tokenrow { display: flex; gap: 5px; margin-right: -1px; }
.tokenrow .field { width: 304px; overflow: hidden; }
.testbtn { width: 104px; height: 30px; border: 1px solid #e0e2e6; border-radius: 4px; background: #e8f0fe; color: #1e4fae; font-weight: 500; line-height: 28px; text-align: center; }
.dots { font-size: 11.500px; line-height: 28px; font-weight: 700; }
.hint { color: #78716c; line-height: 15px; height: 15px; display: flex; align-items: center; }
.tokenrow + .hint { margin-top: 3px; }
.perm { margin-left: 3px; }
.hint + .gap { margin-top: 14px; }
.ph { color: #78716c; }
.enable { display: flex; align-items: center; gap: 6px; margin-top: 12px; height: 18px; font-weight: 500; }
.switch { width: 33px; height: 18px; border-radius: 9px; background: #3b82f6; padding: 1.500px 2px; display: flex; justify-content: flex-end; }
.switch b { width: 15px; height: 15px; border-radius: 50%; background: #fff; box-shadow: 0 5px 8px rgba(0, 0, 0, .12); }
.acts { display: flex; justify-content: flex-end; gap: 6px; margin-top: 18px; }
.btn { height: 30px; border: 1px solid #e4e3e2; border-radius: 4px; width: 57px; display: flex; align-items: center; justify-content: center; font-weight: 500; }
.pri { width: 129px; background: #3b82f6; border-color: #3b82f6; color: #f8fafc; font-weight: 600; gap: 7px; }
.pri .i { width: 11px; height: 11px; }

.toast { position: absolute; left: 1617px; top: 926px; width: 291px; height: 71px; border-radius: 4px; background: #ef4444; color: #fde4e4; padding: 17px 19px 0; box-shadow: 0 5px 12px rgba(0, 0, 0, .2); }
.toast p { line-height: 18px; height: 18px; }
.toast .b { font-weight: 600; color: #fafafa; }
.recorder { position: absolute; left: 1859px; top: 891px; width: 39px; height: 189px; background: #1b1b1b; border-radius: 4px; }
.recorder svg { width: 39px; height: 189px; }
.mark { position: absolute; border: 8px solid #f00; }
.one { left: 724px; top: 309px; width: 476px; height: 523px; }
.two-m { left: 1576px; top: 904px; width: 317px; height: 118px; }
.hand { position: absolute; left: 1118px; top: 619px; width: 26px; height: 33px; }
</style>
